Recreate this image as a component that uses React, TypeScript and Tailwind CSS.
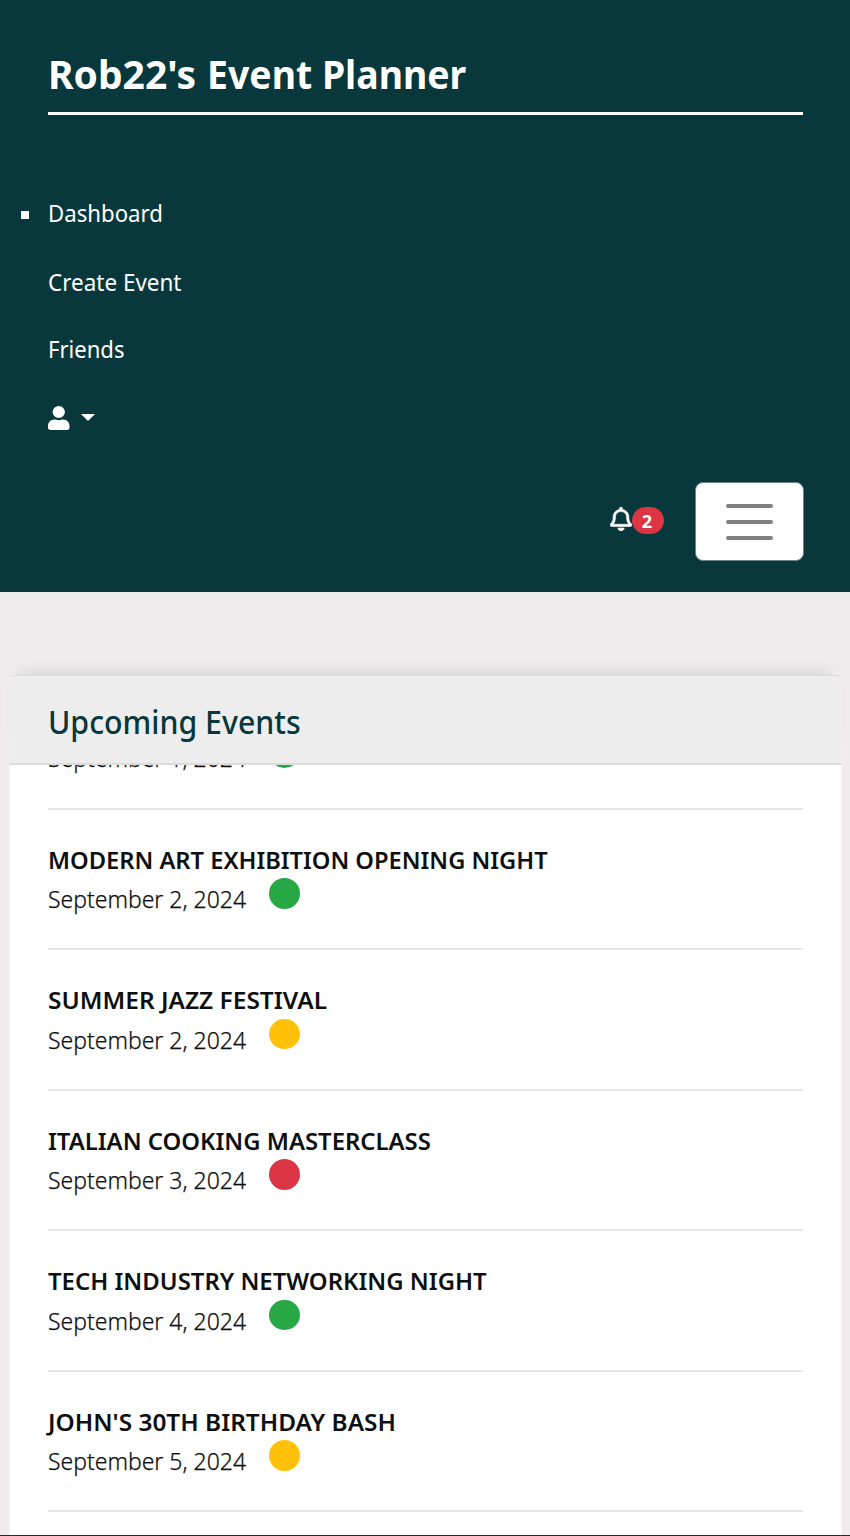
const events = [
  { title: "MODERN ART EXHIBITION OPENING NIGHT", date: "September 2, 2024", dot: "bg-[#28a745]", scale: "scale-x-[0.987]" },
  { title: "SUMMER JAZZ FESTIVAL", date: "September 2, 2024", dot: "bg-[#ffc107]", scale: "scale-x-[1.02]" },
  { title: "ITALIAN COOKING MASTERCLASS", date: "September 3, 2024", dot: "bg-[#dc3545]", scale: "scale-x-[0.994]" },
  { title: "TECH INDUSTRY NETWORKING NIGHT", date: "September 4, 2024", dot: "bg-[#28a745]", scale: "scale-x-[0.996]" },
  { title: "JOHN'S 30TH BIRTHDAY BASH", date: "September 5, 2024", dot: "bg-[#ffc107]", scale: "scale-x-[1.017]" },
];

function EventDate({ date, dot }: { date: string; dot: string }) {
  return (
    <div className="flex h-10 items-start">
      <span className="mt-[3px] w-[221px] leading-9 font-light [-webkit-text-stroke:0.25px]">
        <span className="inline-block origin-left scale-x-[0.956] whitespace-nowrap">{date}</span>
      </span>
      <span className={"size-[30.5px] rounded-full " + dot} />
    </div>
  );
}

export default function App() {
  return (
    <div className="flex h-[1536px] w-[850px] flex-col overflow-hidden border-b border-[#08383b] bg-[#efeced] font-['Noto_Sans','Open_Sans',sans-serif] text-[24px]">
      <header className="h-[592px] shrink-0 bg-[#08383b] px-12 text-white">
        <div className="h-[115px] w-[755px] border-b-[3px] border-white pt-[44px]">
          <h1 className="flex w-max gap-[9px] text-[40px] leading-[60px] font-bold">
            <span className="w-[150px] origin-left scale-x-[0.975] whitespace-nowrap">Rob22's</span>
            <span className="w-max origin-left scale-x-[0.935] whitespace-nowrap">Event Planner</span>
          </h1>
        </div>
        <nav className="flex flex-col pt-[80px] leading-9">
          <div className="-ml-[27px] flex h-[69px] items-start">
            <span className="mt-[16px] mr-[19px] size-2 bg-white" />
            <span className="w-max origin-left scale-x-[0.925]">Dashboard</span>
          </div>
          <div className="h-[67px]"><span className="inline-block origin-left scale-x-[0.936]">Create Event</span></div>
          <div className="h-[67px]"><span className="inline-block origin-left scale-x-[0.92]">Friends</span></div>
          <div className="flex h-[84px] pt-[8px]">
            <svg className="h-6 w-[21.5px]" viewBox="0 0 448 512" preserveAspectRatio="none" fill="currentColor">
              <path d="M224 256a128 128 0 1 0 0-256 128 128 0 1 0 0 256zm90 32h-17a174 174 0 0 1-146 0h-17C60 288 0 348 0 422v42c0 27 21 48 48 48h352c27 0 48-21 48-48v-42c0-74-60-134-134-134z" />
            </svg>
            <svg className="mt-[8px] ml-[11.5px] h-[7px] w-[14px]" viewBox="0 0 14 7" fill="currentColor"><path d="M0 0h14L7 7z" /></svg>
          </div>
        </nav>
        <div className="flex w-[756px] items-start justify-end">
          <svg className="mt-[25px] h-6 w-[22px]" viewBox="0 0 448 512" preserveAspectRatio="none" fill="currentColor" stroke="currentColor" strokeWidth="12">
            <path d="M439.4 362.3c-19.3-20.8-55.5-52-55.5-154.3 0-77.7-54.5-139.9-127.9-155.2V32c0-17.7-14.3-32-32-32s-32 14.3-32 32v20.8C118.6 68.1 64.1 130.3 64.1 208c0 102.3-36.2 133.5-55.5 154.3-6 6.5-8.7 14.2-8.6 21.7.1 16.4 13 32 32.1 32h383.8c19.1 0 32-15.6 32.1-32 .1-7.5-2.6-15.3-8.6-21.7zM67.5 368c21.2-28 44.4-74.3 44.5-159.4 0-.2-.1-.4-.1-.6 0-61.9 50.1-112 112-112s112 50.1 112 112c0 .2-.1.4-.1.6.1 85.1 23.3 131.5 44.5 159.4H67.5zM224 512c35.3 0 63.9-28.7 63.9-64H160.1c0 35.3 28.6 64 63.9 64z" />
          </svg>
          <span className="mt-[25px] flex h-[27px] w-8 items-center justify-center rounded-full bg-[#dc3545] pr-[2px] text-[18px] leading-none font-bold">2</span>
          <button className="ml-[31px] flex h-[79px] w-[109px] flex-col items-center justify-center gap-3 rounded-[8px] border border-[#6b8789] bg-white">
            <span className="h-1 w-[47px] rounded-full bg-[#808080]" />
            <span className="h-1 w-[47px] rounded-full bg-[#808080]" />
            <span className="h-1 w-[47px] rounded-full bg-[#808080]" />
          </button>
        </div>
      </header>
      <main className="mt-[83px] ml-[9px] h-[860px] w-[833px]">
        <h2 className="h-[90px] rounded-t-[5px] border border-b-2 border-[#dcdcdc] border-x-[#efefef] bg-[#ededed] pt-[22px] pl-[38px] text-[32px] leading-[48px] font-medium text-[#08383b] shadow-[0_-12px_16px_-12px_rgba(0,0,0,0.15)]">
          <span className="inline-block origin-left scale-x-[0.947]">Upcoming Events</span>
        </h2>
        <section className="h-[770px] overflow-hidden border-x border-[#f7f6f6] bg-white">
          <ul className="ml-[38px] w-[755px] text-[#0d0f10]">
            <li className="flex h-[44.5px] flex-col border-b-2 border-[#e6e6e6]">
              <div className="-mt-[28px]"><EventDate date="September 1, 2024" dot="bg-[#28a745]" /></div>
            </li>
            {events.map((e) => (
              <li key={e.title} className="h-[140.5px] border-b-2 border-[#e6e6e6] pt-[32px]">
                <h3 className={"w-max origin-left leading-9 font-semibold " + e.scale}>{e.title}</h3>
                <div className="pt-[0.5px]"><EventDate date={e.date} dot={e.dot} /></div>
              </li>
            ))}
          </ul>
        </section>
      </main>
    </div>
  );
}
